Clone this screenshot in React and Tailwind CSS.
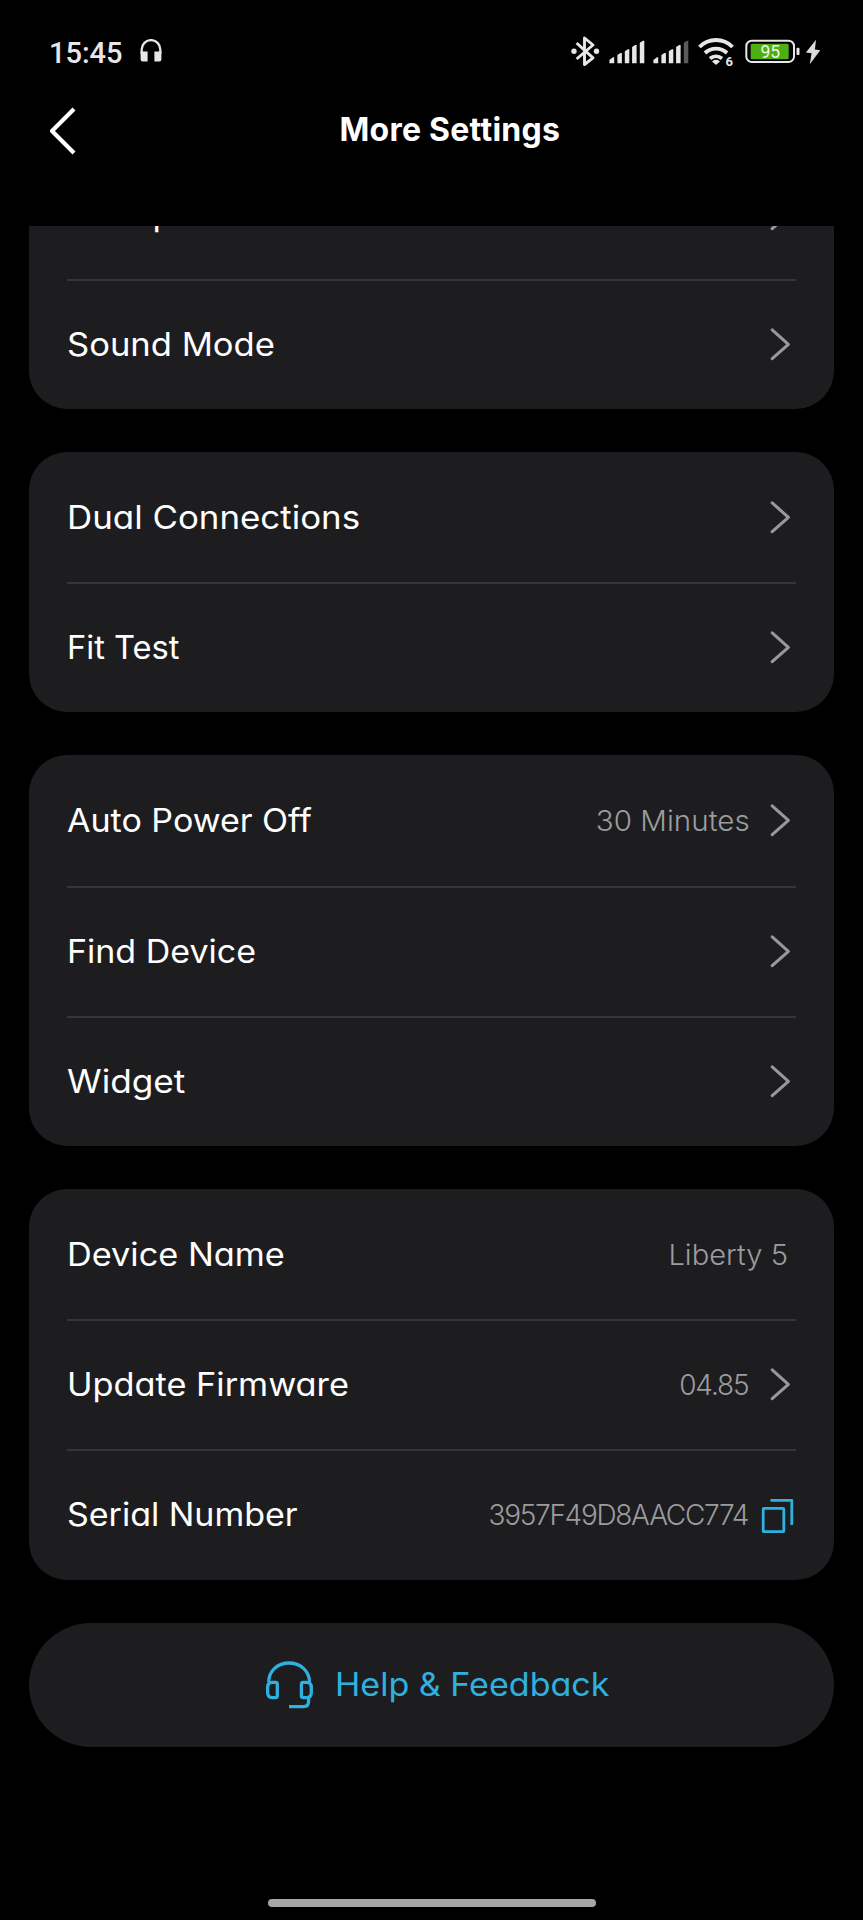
import React from "react";

const Chevron = () => (
  <svg className="h-[36px] w-[28px] shrink-0" viewBox="0 0 28 36" fill="none" stroke="#98989b" strokeWidth="3.1" strokeLinecap="round" strokeLinejoin="round">
    <path d="M4.2 3.9 20.4 18.300 4.2 32.700" />
  </svg>
);

const CopyIcon = () => (
  <svg className="mt-[3px] h-[40px] w-[36px] shrink-0" viewBox="0 0 36 40" fill="none" stroke="#2fb1df" strokeWidth="2.8" strokeLinejoin="round">
    <rect x="3.200" y="12.400" width="20.600" height="23.300" rx="0.8" />
    <path d="M10.500 4.400H31.800V29" />
  </svg>
);

const HeadsetIcon = () => (
  <svg className="h-[50px] w-[50px] shrink-0" viewBox="0 0 50 50" fill="none" stroke="#2fb1df" strokeWidth="3.3">
    <path d="M4.700 22.300C4.700 11 13.500 3 25 3S45.500 11 45.500 22.300" />
    <path d="M8.200 22.300H11.500Q13.300 22.300 13.300 24.100V35.800Q13.300 37.600 11.500 37.600H8.200Q3.600 37.600 3.600 32.500V27.400Q3.600 22.300 8.200 22.300Z" />
    <path d="M42.600 22.300H39.200Q37.400 22.300 37.400 24.100V35.800Q37.400 37.600 39.200 37.600H42.600Q47.300 37.600 47.300 32.500V27.400Q47.300 22.300 42.600 22.300Z" />
    <path d="M44.600 37V41.500Q44.600 46.600 39.500 46.600H25" />
  </svg>
);

const HeadphonesIcon = () => (
  <svg className="h-[24px] w-[22px]" viewBox="0 0 22 24">
    <path d="M1.700 15V10.400A9.300 9.300 0 0 1 20.300 10.400V15" fill="none" stroke="#e8e6e8" strokeWidth="2.300" />
    <path d="M0.600 12.500H7.600V22.500H2.800Q0.600 22.500 0.600 20.300Z M21.400 12.500H14.400V22.500H19.200Q21.400 22.500 21.400 20.300Z" fill="#e8e6e8" />
  </svg>
);

const BluetoothIcon = () => (
  <svg className="h-[32px] w-[30px]" viewBox="0 0 30 32">
    <path d="M6.600 8 23 22.800 14.500 29.500V3L23 10 6.600 24" fill="none" stroke="#e8e6e8" strokeWidth="2.900" strokeLinejoin="round" />
    <circle cx="4" cy="16.300" r="2.700" fill="#e8e6e8" />
    <circle cx="26.500" cy="16.300" r="2.700" fill="#e8e6e8" />
  </svg>
);

const SignalIcon = ({ last = "#e8e6e8", className }) => (
  <svg className={"h-[32px] w-[36px] " + className} viewBox="0 0 36 32" fill="#e8e6e8">
    <path d="M0.400 25 4 22.300H5.200V28.200H0.400Z" />
    <path d="M8.400 20 11.500 18H12.900V28.200H8.400Z" />
    <path d="M15.800 16.200 18.900 14.200H20.300V28.200H15.800Z" />
    <path d="M23.100 12 26.200 10H27.600V28.200H23.100Z" />
    <path d="M30.800 7.700 33.900 5.700H35.300V28.200H30.800Z" fill={last} />
  </svg>
);

const WifiIcon = () => (
  <svg className="ml-[8px] h-[32px] w-[40px]" viewBox="0 0 40 32">
    <g fill="none" stroke="#e8e6e8" strokeWidth="3.900">
      <path d="M2.500 12A23 23 0 0 1 35.500 12" />
      <path d="M8 18A16 16 0 0 1 30 18" />
      <path d="M13 23.500A9.500 9.500 0 0 1 25 23.500" />
    </g>
    <path d="M16 26.500Q19 24.500 22 26.500L19 29Z" fill="#e8e6e8" stroke="#e8e6e8" strokeWidth="1.500" strokeLinejoin="round" />
    <text x="28.500" y="31" fill="#e8e6e8" className="font-['Roboto',sans-serif] text-[13px] font-bold">6</text>
  </svg>
);

const BatteryIcon = () => (
  <svg className="ml-[8px] h-[32px] w-[56px]" viewBox="0 0 56 32">
    <rect x="1.300" y="5.700" width="47.700" height="21.300" rx="5.500" fill="none" stroke="#e8e6e8" strokeWidth="2" />
    <rect x="5.700" y="8.700" width="38" height="15.600" rx="1.500" fill="#4caf12" />
    <rect x="51.500" y="12.700" width="3" height="7.200" rx="1" fill="#e8e6e8" />
    <text x="25.300" y="23.400" textAnchor="middle" fill="#f1f7ec" className="font-['Roboto',sans-serif] text-[17.500px]">95</text>
  </svg>
);

const BoltIcon = () => (
  <svg className="ml-[3px] h-[32px] w-[18px]" viewBox="0 0 18 32">
    <path d="M12 4.700 1.900 17.600 7.600 18.200 5.800 29.200 16.300 15.300 10.900 14.400Z" fill="#dddbdd" />
  </svg>
);

const Row = ({ label, stretch, first, children }) => (
  <div className={"mx-[38px] flex h-[130.2px] shrink-0 items-center justify-between " + (first ? "" : "border-t-2 border-[#363638] pb-[2px]")}>
    <span className={"mt-[2px] origin-left whitespace-nowrap text-[32px] text-white " + stretch}>{label}</span>
    <span className="flex items-center">{children}</span>
  </div>
);

const Value = ({ className, children }) => (
  <span className={"mt-[2px] inline-block origin-right whitespace-nowrap text-[28px] font-light text-[#9c9c9f] " + className}>{children}</span>
);

const Card = ({ children }) => <section className="rounded-[38px] bg-[#1d1d1f]">{children}</section>;

export default function App() {
  return (
    <div className="flex h-[1920px] w-[863px] flex-col overflow-hidden bg-black font-['Inter',sans-serif] [font-feature-settings:'cv11']">
      <div className="flex h-[104px] items-center justify-between pr-[41px] pb-[2px] pl-[49px]">
        <div className="flex items-center">
          <span className="mt-[6px] w-[91px] font-['Roboto',sans-serif] text-[29px] font-medium text-[#e8e6e8]">15:45</span>
          <HeadphonesIcon />
        </div>
        <div className="flex items-center">
          <BluetoothIcon />
          <SignalIcon className="ml-[9px]" />
          <SignalIcon className="ml-[8px]" last="#5a595b" />
          <WifiIcon />
          <BatteryIcon />
          <BoltIcon />
        </div>
      </div>

      <header className="mb-[68px] flex h-[54px] items-center pl-[48px]">
        <svg className="h-[50px] w-[30px]" viewBox="0 0 30 50" fill="none" stroke="#fff" strokeWidth="4.200" strokeLinejoin="round">
          <path d="M26 3 4 25 26 47" />
        </svg>
        <h1 className="mt-[-2px] ml-[261.500px] text-[32px] font-bold tracking-[0.250px] text-white">More Settings</h1>
      </header>

      <main className="flex flex-col gap-[43px] px-[29px]">
        <section className="flex h-[183px] flex-col justify-end overflow-hidden rounded-b-[38px] bg-[#1d1d1f]">
          <Row label="Prompt" stretch="scale-x-[1.08]" first><Chevron /></Row>
          <Row label="Sound Mode" stretch="scale-x-[1.08]"><Chevron /></Row>
        </section>
        <Card>
          <Row label="Dual Connections" stretch="scale-x-[1.09]" first><Chevron /></Row>
          <Row label="Fit Test" stretch="scale-x-[1.02]"><Chevron /></Row>
        </Card>
        <Card>
          <Row label="Auto Power Off" stretch="scale-x-[1.063]" first>
            <Value className="mr-[18px] scale-x-[1.056]">30 Minutes</Value>
            <Chevron />
          </Row>
          <Row label="Find Device" stretch="scale-x-[1.062]"><Chevron /></Row>
          <Row label="Widget" stretch="scale-x-[1.1]"><Chevron /></Row>
        </Card>
        <Card>
          <Row label="Device Name" stretch="scale-x-[1.072]" first>
            <Value className="mr-[8.500px] scale-x-[1.04]">Liberty 5</Value>
          </Row>
          <Row label="Update Firmware" stretch="scale-x-[1.072]">
            <Value className="mr-[19.400px] tracking-[-1.100px]">04.85</Value>
            <Chevron />
          </Row>
          <Row label="Serial Number" stretch="scale-x-[1.062]">
            <Value className="mr-[12px] tracking-[-1.300px]">3957F49D8AACC774</Value>
            <CopyIcon />
          </Row>
        </Card>
        <button className="flex h-[124px] items-center gap-[21px] rounded-full bg-[#1d1d1f] pl-[235px] text-[#2fb1df]">
          <HeadsetIcon />
          <span className="mt-[1px] origin-left scale-x-[1.064] whitespace-nowrap text-[32px]">Help &amp; Feedback</span>
        </button>
      </main>

      <div className="mt-auto mb-[13px] ml-[267.500px] h-[8px] w-[328px] shrink-0 rounded-full bg-[#a6a6a6]" />
    </div>
  );
}
